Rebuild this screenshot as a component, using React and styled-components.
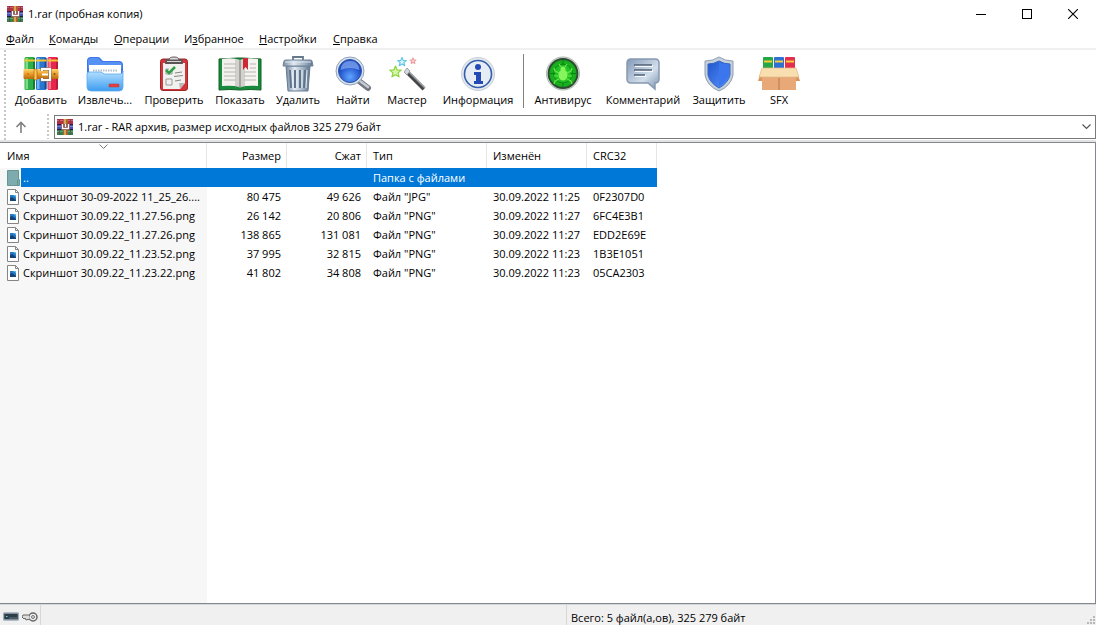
import React from "react";
import styled, { createGlobalStyle } from "styled-components";

const GlobalStyle = createGlobalStyle`
  * {
    box-sizing: border-box;
  }

  body {
    margin: 0;
    background: #ffffff;
    color: #000000;
    font-family: "Open Sans", "Noto Sans", sans-serif;
    font-size: 11px;
    line-height: 18px;
  }

  button,
  select {
    font: inherit;
    color: inherit;
    background: none;
    border: none;
    margin: 0;
    padding: 0;
  }

  svg {
    display: block;
    flex: none;
  }
`;

const Window = styled.div`
  display: flex;
  flex-direction: column;
  min-height: 100vh;
`;

const TitleBar = styled.header`
  display: flex;
  align-items: center;
  height: 28px;
  padding-left: 7px;
`;

const Title = styled.h1`
  flex: 1;
  margin: 0 0 0 5px;
  font-size: 11px;
  font-weight: 400;
`;

const WindowButton = styled.button`
  display: flex;
  align-items: center;
  justify-content: center;
  width: 46px;
  height: 28px;
`;

const MenuBar = styled.nav`
  display: flex;
  height: 22px;
  padding-top: 2px;
  border-bottom: 2px solid #f0f0f0;
`;

const MenuButton = styled.button`
  width: ${(props) => props.$width}px;
  padding-left: 6px;
  text-align: left;
  white-space: nowrap;
`;

const Bars = styled.div`
  display: flex;
  height: 92px;
  padding-left: 4px;
  border-bottom: 2px solid #e3e3e3;
`;

const Grip = styled.div`
  width: 2px;
  margin-right: ${(props) => props.$gap}px;
  background: repeating-linear-gradient(#c8c8c8 0 2px, #ffffff 2px 4px);
`;

const BarColumn = styled.div`
  flex: 1;
  display: flex;
  flex-direction: column;
`;

const ToolBar = styled.div`
  display: flex;
  height: 64px;
  padding-top: 4px;
`;

const ToolButton = styled.button`
  display: flex;
  flex-direction: column;
  align-items: center;
  width: ${(props) => props.$width}px;
  padding-top: 2px;
  line-height: 16px;
  white-space: nowrap;
`;

const Separator = styled.div`
  width: 1px;
  height: 54px;
  margin: 0 4px 0 1px;
  background: #808080;
`;

const AddressBar = styled.div`
  display: flex;
  height: 25px;
`;

const UpButton = styled.button`
  display: flex;
  align-items: center;
  justify-content: center;
  width: 22px;
  margin-right: 15px;
`;

const AddressBox = styled.label`
  flex: 1;
  display: flex;
  align-items: center;
  height: 24px;
  margin-top: 1px;
  padding: 0 4px 0 2px;
  border: 1px solid #7a7a7a;
`;

const AddressSelect = styled.select`
  flex: 1;
  appearance: none;
  padding-left: 5px;
  outline: none;
`;

const FileArea = styled.main`
  flex: 1;
  border: 1px solid #828790;
  border-left: none;
  background: linear-gradient(#f7f7f7, #f7f7f7) 0 25px / 207px 100% no-repeat;
`;

const FileTable = styled.table`
  width: 657px;
  table-layout: fixed;
  border-collapse: separate;
  border-spacing: 0;
`;

const HeadCell = styled.th`
  position: relative;
  width: ${(props) => props.$width}px;
  height: 25px;
  padding: 1px 5px 0 ${(props) => props.$indent || 6}px;
  border-right: 1px solid #e5e5e5;
  background: #ffffff;
  font-weight: 400;
  text-align: ${(props) => (props.$right ? "right" : "left")};
`;

const SortMark = styled.svg`
  position: absolute;
  top: 1px;
  left: calc(50% - 4px);
`;

const Cell = styled.td`
  height: 19px;
  padding: 0 6px;
  text-align: ${(props) => (props.$right ? "right" : "left")};
  white-space: nowrap;
  background: ${(props) => (props.$selected ? "#0078d7" : "none")};
  color: ${(props) => (props.$selected ? "#ffffff" : "inherit")};
`;

const NameCell = styled.td`
  height: 19px;
  padding: 0 0 0 7px;
`;

const NameLine = styled.div`
  display: flex;
  align-items: center;
  height: 19px;
`;

const Name = styled.span`
  flex: 1;
  margin-left: ${(props) => (props.$selected ? 1 : 2)}px;
  padding-left: 2px;
  line-height: 19px;
  white-space: nowrap;
  background: ${(props) => (props.$selected ? "#0078d7" : "none")};
  color: ${(props) => (props.$selected ? "#ffffff" : "inherit")};
`;

const StatusBar = styled.footer`
  display: flex;
  height: 21px;
  background: #f0f0f0;
  border-top: 1px solid #d7d7d7;
`;

const StatusIcons = styled.div`
  display: flex;
  align-items: center;
  gap: 3px;
  width: 41px;
  padding: 3px 0 0 3px;
  border-right: 1px solid #d7d7d7;
`;

const StatusPane = styled.div`
  flex: 1 1 0;
  display: flex;
  justify-content: space-between;
  padding: ${(props) => (props.$last ? "4px 0 0 4px" : "0")};
  border-right: ${(props) => (props.$last ? "none" : "1px solid #d7d7d7")};
`;

const SizeGrip = styled.svg`
  align-self: flex-end;
`;

const ArchiveIcon = () => (
  <svg width="16" height="16" viewBox="0 0 16 16" aria-hidden="true">
    <rect y="0" width="16" height="5" fill="#b92d4a" />
    <rect y="1" width="16" height="1" fill="#dc5a74" />
    <rect y="5" width="16" height="1" fill="#3b1730" />
    <rect y="6" width="16" height="4" fill="#4753b8" />
    <rect y="7" width="16" height="1" fill="#7381d6" />
    <rect y="10" width="16" height="1" fill="#18203f" />
    <rect y="11" width="16" height="5" fill="#2c8451" />
    <rect y="12" width="16" height="1" fill="#55ad78" />
    <path d="M2.500 0v4M2.500 11v5M13.500 0v4M13.500 11v5" stroke="#6d4a48" />
    <rect x="6" width="5" height="16" fill="#a8662c" />
    <rect x="7" width="2" height="16" fill="#d9a453" />
    <rect x="4" y="5" width="9" height="6" fill="#7b4040" />
    <path d="M5.500 5v4.500h6V5M8.500 5v3" fill="none" stroke="#ffffff" strokeWidth="1.4" />
  </svg>
);

const Book = ({ x, fill, dark, light }) => (
  <g>
    <rect x={x} y="1" width="10.5" height="33" rx="1.5" fill={fill} />
    <rect x={x + 1} y="2" width="2.5" height="31" fill={light} />
    <rect x={x + 8.5} y="2" width="2" height="31" fill={dark} />
    <path d={`M${x} 4.500h10.500`} fill="none" stroke="#f2c52d" strokeWidth="2" />
  </g>
);

const AddIcon = () => (
  <svg width="36" height="36" viewBox="0 0 36 36" aria-hidden="true">
    <defs>
      <linearGradient id="belt" x2="0" y2="1">
        <stop stopColor="#ffd56f" />
        <stop offset=".5" stopColor="#e99c26" />
        <stop offset="1" stopColor="#b8690f" />
      </linearGradient>
    </defs>
    <Book x={1.5} fill="#30ae49" dark="#137f31" light="#7fdc86" />
    <Book x={13} fill="#2b77d0" dark="#174b99" light="#72b4f2" />
    <Book x={24.5} fill="#e6264d" dark="#b81a3c" light="#ff7690" />
    <rect x=".5" y="13" width="35" height="10" rx="1" fill="url(#belt)" />
    <rect x="11" y="13" width="3" height="11" rx="1" fill="#ffc656" stroke="#a66214" strokeWidth=".7" />
    <path d="M19 15v-2h8v11h-8v-2" fill="none" stroke="#8a7463" strokeWidth="3.200" />
    <path d="M19 15v-2h8v11h-8v-2" fill="none" stroke="#ffffff" strokeWidth="2" />
    <path d="M19 18.500h6" stroke="#fff" strokeWidth="2" />
    <circle cx="31.500" cy="18" r="1" fill="#855019" />
    <circle cx="5" cy="18" r=".8" fill="#a66214" />
  </svg>
);

const ExtractIcon = () => (
  <svg width="38" height="36" viewBox="0 0 38 36" aria-hidden="true">
    <defs>
      <linearGradient id="folder" x2="0" y2="1">
        <stop stopColor="#b7e1ff" />
        <stop offset="1" stopColor="#3d9df0" />
      </linearGradient>
    </defs>
    <path d="M1 5q0-4 4-4h7q2 0 3 2l2 2h16q4 0 4 4v18H1z" fill="#3f76e8" />
    <path d="M2 5q0-3 3-3h7l4 4h17q3 0 3 3v3H2z" fill="#5791f3" />
    <rect x="3" y="9" width="32" height="15" fill="#fff" />
    <path d="M7 14.500h25" stroke="#b3bfca" strokeWidth="2" strokeDasharray="1.5 1" />
    <path d="M1 18q0-2 2-2h11q2 0 3 1l1 1h16q3 0 3-3v16q0 4-4 4H5q-4 0-4-4z" fill="url(#folder)" stroke="#5daaf0" strokeWidth=".8" />
    <rect x="23" y="28" width="10" height="3" rx=".5" fill="#e3403e" stroke="#ac383e" strokeWidth=".5" />
  </svg>
);

const TestIcon = () => (
  <svg width="36" height="36" viewBox="0 0 36 36" aria-hidden="true">
    <rect x="4.500" y="3" width="27" height="31.500" rx="2.500" fill="#d3353a" stroke="#9f252b" />
    <path d="M7 7h22v20l-5 6H7z" fill="#f1f1ef" />
    <path d="M29 27l-5 6-1-6z" fill="#b9b9b6" />
    <path d="M10 3h16l1 5H9z" fill="#5b5456" />
    <path d="M13 4q0-3 5-3t5 3z" fill="#ddd" stroke="#625759" />
    <path d="M11 5.500h14" stroke="#d8d3d4" />
    <path d="M10 13v5h6v-4M10 13h3M10 23h6v6h-6z" fill="none" stroke="#999" />
    <path d="M10 14l3 3 6-6" fill="none" stroke="#2e9d45" strokeWidth="2.500" />
    <path d="M19 17l7-1M18 20.500l9-1M19 25l6-1" stroke="#888" strokeWidth="1.200" />
  </svg>
);

const ViewIcon = () => (
  <svg width="44" height="36" viewBox="0 0 44 36" aria-hidden="true">
    <path d="M1 3l19-1h4l19 1v31q-11-1-21 0-10-1-21 0z" fill="#198a3b" stroke="#0d6327" />
    <path d="M4 3q10-2 18 1v27q-8-2-18-1z" fill="#f2f1ed" />
    <path d="M40 3q-10-2-18 1v27q8-2 18-1z" fill="#f5f4f0" />
    <path d="M17 3q3 0 5 2 2-2 5-2v27q-3 0-5 2-2-2-5-2z" fill="#c0c0bb" opacity=".65" />
    <path d="M22 4v28" stroke="#76766f" />
    <path
      d="M6 8h12M6 12h12M6 16h12M6 20h12M6 24h12M32 8h6M32 12h6M26 16h12M26 20h12M26 24h12"
      stroke="#b5b6b4"
    />
    <path d="M25 2h5v12l-2.500-3-2.500 3z" fill="#ce2936" />
  </svg>
);

const DeleteIcon = () => (
  <svg width="32" height="36" viewBox="0 0 32 36" aria-hidden="true">
    <defs>
      <linearGradient id="can">
        <stop stopColor="#7588a0" />
        <stop offset=".35" stopColor="#e2eaf2" />
        <stop offset=".7" stopColor="#a3b4c6" />
        <stop offset="1" stopColor="#5f748d" />
      </linearGradient>
    </defs>
    <path d="M11 4V1h10v3" fill="none" stroke="#66788b" strokeWidth="1.800" />
    <path d="M4 10h24l-2 25H6z" fill="url(#can)" stroke="#667a91" />
    <path d="M8 14l1 18M13 14v18M18 14v18M23 14l-1 18" stroke="#5f738a" strokeWidth="2" />
    <path d="M10 14l1 18M15 14v18M20 14v18M25 14l-1 18" stroke="#e7eff6" />
    <path d="M2 5q0-1 2-1h24q2 0 2 1l1 5H1z" fill="url(#can)" stroke="#708398" />
    <path d="M3 6h26" stroke="#dce6ee" />
  </svg>
);

const FindIcon = () => (
  <svg width="38" height="36" viewBox="0 0 38 36" aria-hidden="true">
    <defs>
      <radialGradient id="lens" cy=".75">
        <stop stopColor="#5fa6ff" />
        <stop offset="1" stopColor="#1f4cc9" />
      </radialGradient>
    </defs>
    <path d="M25 25l9 7" stroke="#737980" strokeWidth="6" strokeLinecap="round" />
    <path d="M26 25l8 6" stroke="#c6cdd2" strokeWidth="2.500" strokeLinecap="round" />
    <circle cx="16" cy="15" r="14" fill="#dbe2e8" stroke="#8ea3c2" />
    <circle cx="16" cy="15" r="11.500" fill="url(#lens)" stroke="#3057a6" />
    <path d="M6.500 14q1-9 9.500-9t9.500 9q-9.500-4-19 0z" fill="#8fb5f2" opacity=".65" />
  </svg>
);

const starPoints = [
  [0, -1], [0.26, -0.36], [0.95, -0.31], [0.43, 0.14], [0.59, 0.81],
  [0, 0.45], [-0.59, 0.81], [-0.43, 0.14], [-0.95, -0.31], [-0.26, -0.36],
];

const Star = ({ x, y, r, fill, stroke }) => (
  <polygon
    points={starPoints.map(([px, py]) => `${x + px * r},${y + py * r}`).join(" ")}
    fill={fill}
    stroke={stroke}
    strokeWidth="1.200"
    strokeLinejoin="round"
  />
);

const WizardIcon = () => (
  <svg width="38" height="36" viewBox="0 0 38 36" aria-hidden="true">
    <path d="M18 15l18 18" stroke="#45494c" strokeWidth="4" />
    <path d="M19 14l18 18" stroke="#a3a6a8" strokeWidth="1.300" />
    <path d="M16 16l3-4 3 3-3 4z" fill="#d5d8db" stroke="#85898d" strokeWidth=".7" />
    <Star x={7.5} y={16} r={6} fill="#d6f5a7" stroke="#8bd43c" />
    <Star x={14} y={6} r={4.5} fill="#d8f5ff" stroke="#62c6e6" />
    <Star x={25} y={5} r={3} fill="#ffe5e5" stroke="#eda0a4" />
  </svg>
);

const InfoIcon = () => (
  <svg width="36" height="36" viewBox="0 0 36 36" aria-hidden="true">
    <circle cx="18" cy="18" r="16.500" fill="#e2e7ed" stroke="#c9d1dc" />
    <circle cx="18" cy="18" r="13.500" fill="#e7edf5" stroke="#345dab" strokeWidth="1.600" />
    <circle cx="18" cy="11" r="3" fill="#244bb5" />
    <path d="M14 16h7v9h2v3h-9v-3h2v-6h-2z" fill="#244bb5" />
  </svg>
);

const VirusIcon = () => (
  <svg width="36" height="36" viewBox="0 0 36 36" aria-hidden="true">
    <defs>
      <radialGradient id="radar">
        <stop stopColor="#2fdc2c" />
        <stop offset="1" stopColor="#13a41b" />
      </radialGradient>
    </defs>
    <circle cx="18" cy="17.500" r="16.500" fill="#dce4dc" stroke="#a9b3aa" />
    <circle cx="18" cy="17.500" r="14.500" fill="url(#radar)" stroke="#2f4a33" strokeWidth="1.800" />
    <circle cx="18" cy="17.500" r="9.500" fill="none" stroke="#0b8a19" />
    <path d="M18 4v5M18 27v4M5 17.500h5M26 17.500h5" stroke="#0b7d19" />
    <ellipse cx="18" cy="19" rx="4.500" ry="5.500" fill="#86f45c" />
    <circle cx="18" cy="13" r="2.500" fill="#86f45c" />
    <path
      d="M16 11l-2-3M20 11l2-3M14 17l-4-2-1-3M22 17l4-2 1-3M13 20H9M23 20h4M14 23l-4 2-1 3M22 23l4 2 1 3"
      fill="none"
      stroke="#6be646"
      strokeWidth="1.200"
    />
  </svg>
);

const CommentIcon = () => (
  <svg width="36" height="36" viewBox="0 0 36 36" aria-hidden="true">
    <defs>
      <linearGradient id="bubble" x2="1" y2="1">
        <stop stopColor="#8399b7" />
        <stop offset=".6" stopColor="#d2deeb" />
        <stop offset="1" stopColor="#7890ae" />
      </linearGradient>
    </defs>
    <path d="M6 3h24q4 0 4 4v16q0 4-4 4v6l-7-6H6q-4 0-4-4V7q0-4 4-4z" fill="url(#bubble)" stroke="#8799b1" strokeWidth="1.500" />
    <path d="M10 10h18M10 15h18M10 20h11" stroke="#f5f9ff" strokeWidth="2" />
    <path d="M9 9h18M9 14h18M9 19h11" stroke="#4f6075" strokeWidth="1.600" />
  </svg>
);

const ProtectIcon = () => (
  <svg width="32" height="36" viewBox="0 0 32 36" aria-hidden="true">
    <defs>
      <linearGradient id="shield" x2="1" y2="1">
        <stop stopColor="#1f55ce" />
        <stop offset="1" stopColor="#5b94fb" />
      </linearGradient>
    </defs>
    <path d="M16 1q6 4 14 4v14q-2 11-14 16Q4 30 2 19V5q8 0 14-4z" fill="#c5d0dc" stroke="#8e9fb2" />
    <path d="M16 5q5 3 11 3v11q-2 8-11 13Q7 27 5 19V8q6 0 11-3z" fill="url(#shield)" stroke="#3764c0" />
    <path d="M16 6q5 3 10 3v9q-2 8-10 12z" fill="#3b76ef" />
  </svg>
);

const SfxIcon = () => (
  <svg width="42" height="36" viewBox="0 0 42 36" aria-hidden="true">
    <rect x="5" y="1" width="10" height="15" rx="1" fill="#26a747" />
    <rect x="16" y="1" width="10" height="15" rx="1" fill="#2e71d3" />
    <rect x="27" y="1" width="10" height="15" rx="1" fill="#e32e4f" />
    <path d="M6 5.500h8M17 5.500h8M28 5.500h8" fill="none" stroke="#f6cf38" strokeWidth="2" />
    <path d="M4 13L0 25h5M38 13l4 12h-5" fill="#d99661" />
    <path d="M4 19h34v15H4z" fill="#e8a878" />
    <path d="M21 22v12" stroke="#b87a4b" />
    <path d="M4 12h34l3 9H1z" fill="#f9dfb0" stroke="#e5b986" strokeWidth=".7" />
  </svg>
);

const FileIcon = () => (
  <svg width="12" height="16" viewBox="0 0 12 16" aria-hidden="true">
    <path d="M.5.5h8l3 3v12H.5z" fill="#fff" stroke="#858585" />
    <path d="M8.500.5v3h3" fill="none" stroke="#858585" />
    <rect x="3" y="6" width="6" height="6" fill="#267ac5" />
    <path d="M3 9l2-1 4 3v1H3z" fill="#174174" />
    <path d="M6 6h3v2z" fill="#68bce6" />
  </svg>
);

const FolderIcon = () => (
  <svg width="13" height="16" viewBox="0 0 13 16" aria-hidden="true">
    <path d="M.5.5h11v9h1v6H.5z" fill="#7eabae" stroke="#659694" />
    <path d="M10.500 10v5" stroke="#5f9587" />
  </svg>
);

const menu = [
  { key: "Ф", text: "айл", width: 43 },
  { key: "К", text: "оманды", width: 65 },
  { key: "О", text: "перации", width: 70 },
  { before: "И", key: "з", text: "бранное", width: 75 },
  { key: "Н", text: "астройки", width: 74 },
  { key: "С", text: "правка", width: 60 },
];

const archiveTools = [
  { label: "Добавить", width: 62, Icon: AddIcon },
  { label: "Извлечь...", width: 66, Icon: ExtractIcon },
  { label: "Проверить", width: 72, Icon: TestIcon },
  { label: "Показать", width: 60, Icon: ViewIcon },
  { label: "Удалить", width: 56, Icon: DeleteIcon },
  { label: "Найти", width: 54, Icon: FindIcon },
  { label: "Мастер", width: 54, Icon: WizardIcon },
  { label: "Информация", width: 88, Icon: InfoIcon },
];

const extraTools = [
  { label: "Антивирус", width: 70, Icon: VirusIcon },
  { label: "Комментарий", width: 90, Icon: CommentIcon },
  { label: "Защитить", width: 62, Icon: ProtectIcon },
  { label: "SFX", width: 58, Icon: SfxIcon },
];

const files = [
  ["Скриншот 30-09-2022 11_25_26....", "80 475", "49 626", 'Файл "JPG"', "30.09.2022 11:25", "0F2307D0"],
  ["Скриншот 30.09.22_11.27.56.png", "26 142", "20 806", 'Файл "PNG"', "30.09.2022 11:27", "6FC4E3B1"],
  ["Скриншот 30.09.22_11.27.26.png", "138 865", "131 081", 'Файл "PNG"', "30.09.2022 11:27", "EDD2E69E"],
  ["Скриншот 30.09.22_11.23.52.png", "37 995", "32 815", 'Файл "PNG"', "30.09.2022 11:23", "1B3E1051"],
  ["Скриншот 30.09.22_11.23.22.png", "41 802", "34 808", 'Файл "PNG"', "30.09.2022 11:23", "05CA2303"],
];

const Tools = ({ items }) =>
  items.map(({ label, width, Icon }) => (
    <ToolButton key={label} $width={width}>
      <Icon />
      {label}
    </ToolButton>
  ));

const App = () => {
  return (
    <>
      <GlobalStyle />
      <Window>
        <TitleBar>
          <ArchiveIcon />
          <Title>1.rar (пробная копия)</Title>
          <WindowButton aria-label="Свернуть">
            <svg width="10" height="10">
              <path d="M0 5.500h10" stroke="#000" />
            </svg>
          </WindowButton>
          <WindowButton aria-label="Развернуть">
            <svg width="10" height="10">
              <rect x=".5" y=".5" width="9" height="9" fill="none" stroke="#000" />
            </svg>
          </WindowButton>
          <WindowButton aria-label="Закрыть">
            <svg width="10" height="10">
              <path d="M0 0l10 10M10 0L0 10" stroke="#000" strokeWidth="1.100" />
            </svg>
          </WindowButton>
        </TitleBar>

        <MenuBar>
          {menu.map((item) => (
            <MenuButton key={item.text} $width={item.width}>
              {item.before}
              <u>{item.key}</u>
              {item.text}
            </MenuButton>
          ))}
        </MenuBar>

        <Bars>
          <Grip $gap={4} />
          <BarColumn>
            <ToolBar>
              <Tools items={archiveTools} />
              <Separator />
              <Tools items={extraTools} />
            </ToolBar>
            <AddressBar>
              <UpButton aria-label="Вверх">
                <svg width="12" height="12" viewBox="0 0 12 12">
                  <path d="M6 12V1.500M1.500 6L6 1.500 10.500 6" fill="none" stroke="#808080" strokeWidth="1.600" />
                </svg>
              </UpButton>
              <Grip $gap={5} />
              <AddressBox>
                <ArchiveIcon />
                <AddressSelect aria-label="Адрес">
                  <option>1.rar - RAR архив, размер исходных файлов 325 279 байт</option>
                </AddressSelect>
                <svg width="9" height="6" viewBox="0 0 9 6">
                  <path d="M.5.5l4 4 4-4" fill="none" stroke="#555" strokeWidth="1.200" />
                </svg>
              </AddressBox>
            </AddressBar>
          </BarColumn>
        </Bars>

        <FileArea>
          <FileTable>
            <thead>
              <tr>
                <HeadCell $width={207} $indent={7}>
                  Имя
                  <SortMark width="9" height="6" viewBox="0 0 9 6">
                    <path d="M.5.5l4 4 4-4" fill="none" stroke="#777" />
                  </SortMark>
                </HeadCell>
                <HeadCell $width={80} $right>Размер</HeadCell>
                <HeadCell $width={80} $right>Сжат</HeadCell>
                <HeadCell $width={120}>Тип</HeadCell>
                <HeadCell $width={100}>Изменён</HeadCell>
                <HeadCell $width={70}>CRC32</HeadCell>
              </tr>
            </thead>
            <tbody>
              <tr>
                <NameCell>
                  <NameLine>
                    <FolderIcon />
                    <Name $selected>..</Name>
                  </NameLine>
                </NameCell>
                <Cell $selected />
                <Cell $selected />
                <Cell $selected>Папка с файлами</Cell>
                <Cell $selected />
                <Cell $selected />
              </tr>
              {files.map(([name, size, packed, type, modified, crc]) => (
                <tr key={name}>
                  <NameCell>
                    <NameLine>
                      <FileIcon />
                      <Name>{name}</Name>
                    </NameLine>
                  </NameCell>
                  <Cell $right>{size}</Cell>
                  <Cell $right>{packed}</Cell>
                  <Cell>{type}</Cell>
                  <Cell>{modified}</Cell>
                  <Cell>{crc}</Cell>
                </tr>
              ))}
            </tbody>
          </FileTable>
        </FileArea>

        <StatusBar>
          <StatusIcons>
            <svg width="16" height="9" viewBox="0 0 16 9">
              <rect x=".5" y="1" width="15" height="7" rx="1" fill="#2d3e4b" stroke="#9cabb6" strokeWidth="1.500" />
              <path d="M3 4.500h1.500" stroke="#7ed4e8" />
              <path d="M6 6h8" stroke="#697985" />
            </svg>
            <svg width="16" height="12" viewBox="0 0 16 12">
              <circle cx="11" cy="6" r="4" fill="#eee" stroke="#666" strokeWidth="1.500" />
              <circle cx="11" cy="6" r="1.500" fill="#ddd" stroke="#777" />
              <path d="M7 4H1L0 6l2 2 1-1 1 2 4-1" fill="#ddd" stroke="#666" />
            </svg>
          </StatusIcons>
          <StatusPane />
          <StatusPane $last>
            Всего: 5 файл(а,ов), 325 279 байт
            <SizeGrip width="10" height="9" fill="#b7b7b7">
              <path d="M7 0h2v2H7zM4 3h2v2H4zM7 3h2v2H7zM1 6h2v2H1zM4 6h2v2H4zM7 6h2v2H7z" />
            </SizeGrip>
          </StatusPane>
        </StatusBar>
      </Window>
    </>
  );
};

export default App;
